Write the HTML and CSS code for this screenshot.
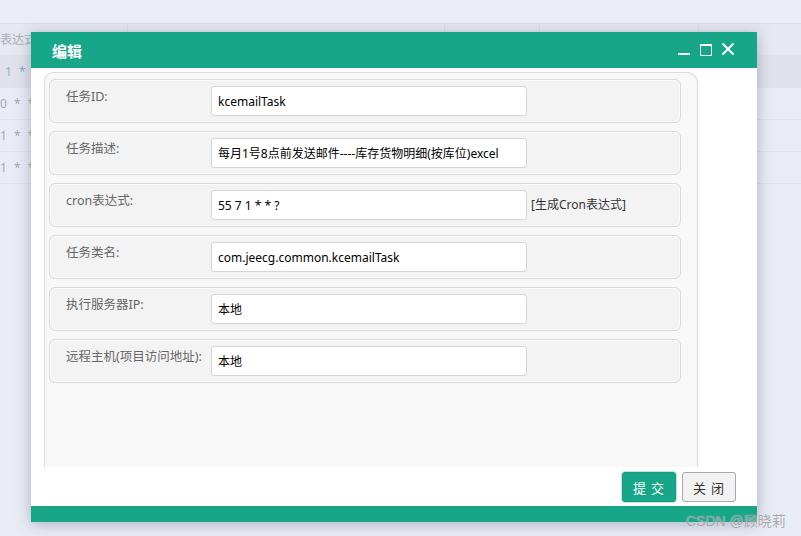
FILE: index.html
```html
<!DOCTYPE html>
<html lang="zh-CN">
<head>
<meta charset="utf-8">
<title>编辑</title>
<link rel="stylesheet" href="styles.css">
</head>
<body>
<div class="page">
  <div class="topbar"></div>
  <div class="grid">
    <div class="grow ghead"><div class="gc c1 cut">表达式</div><div class="gc c2"></div><div class="gc c3"></div><div class="gc c4"></div><div class="gc c5"></div></div>
    <div class="grow gsel"><div class="gc c1 sel">1 * * ?</div><div class="gc c2"></div><div class="gc c3"></div><div class="gc c4"></div><div class="gc c5"></div></div>
    <div class="grow"><div class="gc c1 cut2">0 * * ?</div><div class="gc c2"></div><div class="gc c3"></div><div class="gc c4"></div><div class="gc c5"></div></div>
    <div class="grow"><div class="gc c1 cut2">1 * * ?</div><div class="gc c2"></div><div class="gc c3"></div><div class="gc c4"></div><div class="gc c5"></div></div>
    <div class="grow"><div class="gc c1 cut2">1 * * ?</div><div class="gc c2"></div><div class="gc c3"></div><div class="gc c4"></div><div class="gc c5"></div></div>
  </div>

  <div class="dialog">
    <div class="dlg-head">
      <div class="dlg-title">编辑</div>
      <div class="dlg-tools">
        <svg class="ico" width="14" height="14" viewBox="0 0 14 14"><rect x="1" y="10" width="12" height="2" fill="#fff"/></svg>
        <svg class="ico" width="14" height="14" viewBox="0 0 14 14"><rect x="1.5" y="1.5" width="11" height="11" fill="none" stroke="#fff" stroke-width="1"/><rect x="1" y="1" width="12" height="2" fill="#fff"/></svg>
        <svg class="ico" width="14" height="14" viewBox="0 0 14 14"><path d="M1.5 0.5 L12.5 11.5 M12.5 0.5 L1.5 11.5" stroke="#fff" stroke-width="2" fill="none"/></svg>
      </div>
    </div>
    <div class="dlg-body">
      <div class="panel">
        <div class="card"><div class="lbl">任务ID:</div><div class="inp">kcemailTask</div></div>
        <div class="card"><div class="lbl">任务描述:</div><div class="inp">每月1号8点前发送邮件----库存货物明细(按库位)excel</div></div>
        <div class="card"><div class="lbl">cron表达式:</div><div class="inp">55 7 1 * * ?</div><span class="gen">[生成Cron表达式]</span></div>
        <div class="card"><div class="lbl">任务类名:</div><div class="inp">com.jeecg.common.kcemailTask</div></div>
        <div class="card"><div class="lbl">执行服务器IP:</div><div class="inp">本地</div></div>
        <div class="card"><div class="lbl">远程主机(项目访问地址):</div><div class="inp">本地</div></div>
      </div>
      <div class="btns">
        <button class="btn btn-ok">提 交</button>
        <button class="btn btn-close">关 闭</button>
      </div>
    </div>
    <div class="dlg-foot"></div>
  </div>

  <div class="watermark">CSDN @顾晓莉</div>
</div>
</body>
</html>
```

FILE: styles.css
```css
html, body {
  margin: 0;
  padding: 0;
}
body {
  width: 801px;
  height: 536px;
  overflow: hidden;
  background: #e9ecf5;
  font-family: "Noto Sans", "Noto Sans CJK SC", sans-serif;
}
.page {
  position: relative;
  width: 801px;
  height: 536px;
  overflow: hidden;
}
.topbar {
  height: 24px;
  background: #ebeef6;
  border-bottom: 1px solid #dcdfe7;
  box-sizing: border-box;
}
.grid {
  display: flex;
  flex-direction: column;
}
.grow {
  display: flex;
  height: 31px;
  border-bottom: 1px solid #dfe2ea;
  background: #e9ecf5;
}
.ghead {
  height: 31px;
  background: #e6e9f1;
}
.gsel {
  background: #dfe2eb;
}
.gc {
  height: 100%;
  border-right: 1px solid #dcdfe7;
  font-size: 12px;
  line-height: 31px;
  color: #a4a9b5;
  white-space: nowrap;
  overflow: hidden;
}
.c1 { width: 127px; }
.c2 { width: 316px; }
.c3 { width: 94px; }
.c4 { width: 158px; }
.c5 { flex: 1; border-right: 0; }
.cut { color: #a9aebb; }
.cut2 { letter-spacing: 2px; }
.sel { text-indent: 5px; letter-spacing: 2px; color: #86b3c0; }

.dialog {
  position: absolute;
  left: 31px;
  top: 32px;
  width: 726px;
  height: 490px;
  background: #fff;
  box-shadow: 0 2px 14px rgba(60, 70, 100, 0.35);
  display: flex;
  flex-direction: column;
}
.dlg-head {
  height: 36px;
  background: #18a689;
  display: flex;
  align-items: center;
  justify-content: space-between;
  padding: 0 22px 0 21px;
}
.dlg-title {
  color: #fff;
  font-weight: bold;
  font-size: 15px;
  font-family: "Noto Sans CJK SC", sans-serif;
}
.dlg-tools {
  display: flex;
  gap: 8px;
  align-items: center;
}
.ico { display: block; }
.dlg-body {
  flex: 1;
  padding: 4px 21px 4px 13px;
  display: flex;
  flex-direction: column;
}
.panel {
  width: 654px;
  height: 395px;
  box-sizing: border-box;
  background: #f8f8f8;
  border: 1px solid #dcdcdc;
  border-bottom: 0;
  border-radius: 9px 11px 0 0;
  padding: 6px 16px 0 4px;
  display: flex;
  flex-direction: column;
  gap: 8px;
}
.card {
  height: 44px;
  box-sizing: border-box;
  background: #f3f3f3;
  border: 1px solid #dadada;
  border-radius: 6px;
  box-shadow: inset 0 0 0 1px #fbfbfb;
  display: flex;
  align-items: flex-start;
}
.lbl {
  width: 145px;
  padding-left: 16px;
  padding-top: 8px;
  font-size: 12.5px;
  line-height: 18px;
  color: #666;
  white-space: nowrap;
}
.inp {
  margin-top: 6px;
  width: 316px;
  height: 30px;
  box-sizing: border-box;
  background: #fff;
  border: 1px solid #d6d6d6;
  border-radius: 3px;
  padding-left: 6px;
  font-size: 12px;
  line-height: 29px;
  color: #000;
  white-space: nowrap;
  overflow: hidden;
}
.gen {
  margin-top: 6px;
  margin-left: 4px;
  font-size: 12px;
  line-height: 30px;
  color: #333;
}
.btns {
  margin-top: 5px;
  display: flex;
  justify-content: flex-end;
  gap: 6px;
}
.btn {
  width: 54px;
  height: 30px;
  box-sizing: border-box;
  border-radius: 3px;
  font-family: "Noto Sans CJK SC", sans-serif;
  font-size: 13px;
  letter-spacing: 1px;
  padding: 0;
  cursor: pointer;
}
.btn-ok {
  background: #18a689;
  color: #fff;
  border: 1px solid #1a9c82;
  box-shadow: 0 0 0 1px #bfe6dd;
}
.btn-close {
  background: #f2f2f2;
  color: #333;
  border: 1px solid #a8a8a8;
}
.dlg-foot {
  height: 16px;
  background: #18a689;
}
.watermark {
  position: absolute;
  left: 686px;
  top: 510px;
  font-family: "Liberation Sans", "Noto Sans CJK SC", sans-serif;
  font-size: 14px;
  color: rgba(130, 130, 130, 0.7);
  text-shadow: 0 0 1px rgba(255, 255, 255, 0.8);
  white-space: nowrap;
}
```
